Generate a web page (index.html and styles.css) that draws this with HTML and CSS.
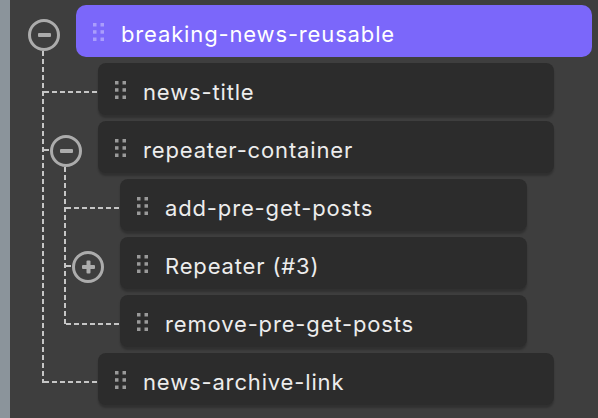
FILE: index.html
```html
<!DOCTYPE html>
<html>
	<head>
		<meta charset="utf-8">
		<title>Layers</title>
		<link rel="stylesheet" href="styles.css">
	</head>
	<body>
		<div class="panel">
			<div class="strip"></div>
			<div class="tree">
				<!--root-->
				<div class="node">
					<div class="item">
						<span class="toggle minus"></span>
						<div class="card lv0 selected">
							<svg class="grip" width="11" height="18" viewBox="0 0 11 18"><rect x="0" y="0" width="3.5" height="3.5"/><rect x="7.5" y="0" width="3.5" height="3.5"/><rect x="0" y="7.2" width="3.5" height="3.5"/><rect x="7.5" y="7.2" width="3.5" height="3.5"/><rect x="0" y="14.5" width="3.5" height="3.5"/><rect x="7.5" y="14.5" width="3.5" height="3.5"/></svg>
							<span class="label">breaking-news-reusable</span>
						</div>
					</div>
					<div class="children">
						<div class="node leaf">
							<div class="item">
								<span class="slot"></span>
								<div class="card lv1">
									<svg class="grip" width="11" height="18" viewBox="0 0 11 18"><rect x="0" y="0" width="3.5" height="3.5"/><rect x="7.5" y="0" width="3.5" height="3.5"/><rect x="0" y="7.2" width="3.5" height="3.5"/><rect x="7.5" y="7.2" width="3.5" height="3.5"/><rect x="0" y="14.5" width="3.5" height="3.5"/><rect x="7.5" y="14.5" width="3.5" height="3.5"/></svg>
									<span class="label">news-title</span>
								</div>
							</div>
						</div>
						<div class="node">
							<div class="item">
								<span class="toggle minus"></span>
								<div class="card lv1">
									<svg class="grip" width="11" height="18" viewBox="0 0 11 18"><rect x="0" y="0" width="3.5" height="3.5"/><rect x="7.5" y="0" width="3.5" height="3.5"/><rect x="0" y="7.2" width="3.5" height="3.5"/><rect x="7.5" y="7.2" width="3.5" height="3.5"/><rect x="0" y="14.5" width="3.5" height="3.5"/><rect x="7.5" y="14.5" width="3.5" height="3.5"/></svg>
									<span class="label">repeater-container</span>
								</div>
							</div>
							<div class="children">
								<div class="node leaf">
									<div class="item">
										<span class="slot"></span>
										<div class="card lv2">
											<svg class="grip" width="11" height="18" viewBox="0 0 11 18"><rect x="0" y="0" width="3.5" height="3.5"/><rect x="7.5" y="0" width="3.5" height="3.5"/><rect x="0" y="7.2" width="3.5" height="3.5"/><rect x="7.5" y="7.2" width="3.5" height="3.5"/><rect x="0" y="14.5" width="3.5" height="3.5"/><rect x="7.5" y="14.5" width="3.5" height="3.5"/></svg>
											<span class="label">add-pre-get-posts</span>
										</div>
									</div>
								</div>
								<div class="node">
									<div class="item">
										<span class="toggle plus"></span>
										<div class="card lv2">
											<svg class="grip" width="11" height="18" viewBox="0 0 11 18"><rect x="0" y="0" width="3.5" height="3.5"/><rect x="7.5" y="0" width="3.5" height="3.5"/><rect x="0" y="7.2" width="3.5" height="3.5"/><rect x="7.5" y="7.2" width="3.5" height="3.5"/><rect x="0" y="14.5" width="3.5" height="3.5"/><rect x="7.5" y="14.5" width="3.5" height="3.5"/></svg>
											<span class="label">Repeater (#3)</span>
										</div>
									</div>
								</div>
								<div class="node leaf">
									<div class="item">
										<span class="slot"></span>
										<div class="card lv2">
											<svg class="grip" width="11" height="18" viewBox="0 0 11 18"><rect x="0" y="0" width="3.5" height="3.5"/><rect x="7.5" y="0" width="3.5" height="3.5"/><rect x="0" y="7.2" width="3.5" height="3.5"/><rect x="7.5" y="7.2" width="3.5" height="3.5"/><rect x="0" y="14.5" width="3.5" height="3.5"/><rect x="7.5" y="14.5" width="3.5" height="3.5"/></svg>
											<span class="label">remove-pre-get-posts</span>
										</div>
									</div>
								</div>
							</div>
						</div>
						<div class="node leaf">
							<div class="item">
								<span class="slot"></span>
								<div class="card lv1">
									<svg class="grip" width="11" height="18" viewBox="0 0 11 18"><rect x="0" y="0" width="3.5" height="3.5"/><rect x="7.5" y="0" width="3.5" height="3.5"/><rect x="0" y="7.2" width="3.5" height="3.5"/><rect x="7.5" y="7.2" width="3.5" height="3.5"/><rect x="0" y="14.5" width="3.5" height="3.5"/><rect x="7.5" y="14.5" width="3.5" height="3.5"/></svg>
									<span class="label">news-archive-link</span>
								</div>
							</div>
						</div>
					</div>
				</div>
			</div>
		</div>
	</body>
</html>
```

FILE: styles.css
```css
* {
	margin: 0;
	padding: 0;
	box-sizing: border-box;
}

body {
	background-color: #3e3e3e;
	font-family: Inter, "Noto Sans", sans-serif;
}

.panel {
	display: flex;
	height: 418px;
	overflow: hidden;
}

.strip {
	width: 10px;
	flex-shrink: 0;
	background-color: #8b949b;
}

.tree {
	flex: 1;
	padding-top: 5px;
}

.node {
	display: flex;
	flex-direction: column;
	gap: 6px;
}

.children {
	display: flex;
	flex-direction: column;
	gap: 6px;
	padding-left: 22px;
	position: relative;
}

/* vertical dashed line of a branch */
.children::before {
	content: "";
	position: absolute;
	left: 32px;
	top: -12px;
	bottom: 22px;
	width: 2px;
	background: repeating-linear-gradient(to bottom, #c6c6c6 0 5px, transparent 5px 8px);
}

.item {
	display: flex;
	align-items: flex-start;
	padding-left: 18px;
	position: relative;
}

/* horizontal dashed connector */
.children > .node > .item::before {
	content: "";
	position: absolute;
	left: 12px;
	top: 28px;
	width: 7px;
	height: 2px;
	background: repeating-linear-gradient(to right, #c6c6c6 0 5px, transparent 5px 8px);
}

.children > .leaf > .item::before {
	width: 54px;
}

.slot {
	width: 32px;
	flex-shrink: 0;
	margin-right: 16px;
}

.toggle {
	width: 32px;
	height: 32px;
	flex-shrink: 0;
	margin-top: 14px;
	margin-right: 16px;
	border: 3px solid #acacac;
	border-radius: 50%;
	position: relative;
	z-index: 1;
}

.toggle::before,
.toggle.plus::after {
	content: "";
	position: absolute;
	left: 6.5px;
	top: 11px;
	width: 13px;
	height: 4px;
	border-radius: 1px;
	background-color: #acacac;
}

.toggle.plus::after {
	transform: rotate(90deg);
}

.card {
	display: flex;
	align-items: center;
	height: 52px;
	padding: 5px 0 0 17px;
	border-radius: 8px;
	background-color: #2c2c2c;
	box-shadow: 0 3px 2px rgba(0, 0, 0, 0.22);
}

.card.lv0 {
	width: 516px;
}

.card.lv1 {
	width: 456px;
}

.card.lv2 {
	width: 407px;
}

.card.selected {
	background-color: #7b67fa;
	border-radius: 10px;
	box-shadow: none;
}

.grip {
	flex-shrink: 0;
	margin-top: -4px;
	margin-right: 17px;
	fill: #9a9a9a;
}

.selected .grip {
	fill: #aa9dfc;
}

.label {
	font-size: 22px;
	letter-spacing: 0.85px;
	color: #ededed;
	white-space: nowrap;
}

.selected .label {
	color: #ffffff;
}
```
